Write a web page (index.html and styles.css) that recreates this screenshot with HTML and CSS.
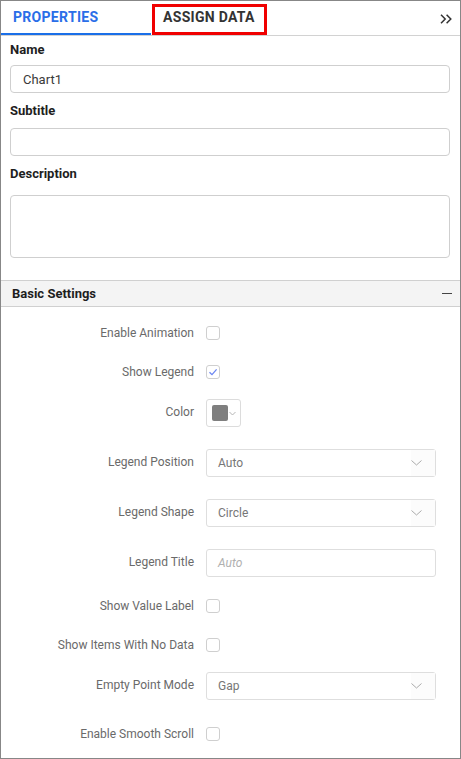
FILE: index.html
```html
<!DOCTYPE html>
<html>
<head>
<meta charset="utf-8">
<link rel="stylesheet" href="styles.css">
</head>
<body>
<div class="panel">
  <div class="tabs">
    <div class="tab active">PROPERTIES</div>
    <div class="tab marked">ASSIGN DATA</div>
    <div class="tab-spacer"></div>
    <svg class="collapse" width="12" height="10" viewBox="0 0 12 10"><path d="M1 0.8 L5.2 5 L1 9.2 M6.6 0.8 L10.8 5 L6.6 9.2" fill="none" stroke="#333" stroke-width="1.5"/></svg>
  </div>

  <div class="general">
    <div class="flabel first">Name</div>
    <div class="tbox"><span class="val">Chart1</span></div>
    <div class="flabel sub">Subtitle</div>
    <div class="tbox"></div>
    <div class="flabel desc">Description</div>
    <div class="tbox area"></div>
  </div>

  <div class="sect-head">
    <span>Basic Settings</span>
    <span class="minus"></span>
  </div>

  <div class="settings">
    <div class="row chk">
      <div class="lbl">Enable Animation</div>
      <div class="cb"></div>
    </div>
    <div class="row chk">
      <div class="lbl">Show Legend</div>
      <div class="cb"><svg width="12" height="12" viewBox="0 0 12 12"><path d="M2.5 6.2 L5 8.6 L9.6 3.4" fill="none" stroke="#6b86f2" stroke-width="1.3"/></svg></div>
    </div>
    <div class="row dd up3">
      <div class="lbl">Color</div>
      <div class="picker"><span class="swatch"></span><svg width="7" height="5" viewBox="0 0 7 5"><path d="M0.5 1 L3.5 4 L6.5 1" fill="none" stroke="#b5b5b5" stroke-width="1"/></svg></div>
    </div>
    <div class="row dd">
      <div class="lbl">Legend Position</div>
      <div class="select"><span class="sval">Auto</span><span class="sicon"><svg width="11" height="6" viewBox="0 0 11 6"><path d="M0.5 0.5 L5.5 5 L10.5 0.5" fill="none" stroke="#ababab" stroke-width="1"/></svg></span></div>
    </div>
    <div class="row dd">
      <div class="lbl">Legend Shape</div>
      <div class="select"><span class="sval">Circle</span><span class="sicon"><svg width="11" height="6" viewBox="0 0 11 6"><path d="M0.5 0.5 L5.5 5 L10.5 0.5" fill="none" stroke="#ababab" stroke-width="1"/></svg></span></div>
    </div>
    <div class="row dd">
      <div class="lbl">Legend Title</div>
      <div class="select"><span class="sval ph">Auto</span></div>
    </div>
    <div class="row chk up2">
      <div class="lbl">Show Value Label</div>
      <div class="cb"></div>
    </div>
    <div class="row chk">
      <div class="lbl">Show Items With No Data</div>
      <div class="cb"></div>
    </div>
    <div class="row dd up3">
      <div class="lbl">Empty Point Mode</div>
      <div class="select"><span class="sval">Gap</span><span class="sicon"><svg width="11" height="6" viewBox="0 0 11 6"><path d="M0.5 0.5 L5.5 5 L10.5 0.5" fill="none" stroke="#ababab" stroke-width="1"/></svg></span></div>
    </div>
    <div class="row chk down3">
      <div class="lbl">Enable Smooth Scroll</div>
      <div class="cb"></div>
    </div>
  </div>
</div>
</body>
</html>
```

FILE: styles.css
```css
* { box-sizing: border-box; }
html, body { margin: 0; padding: 0; background: #fff; }
body { font-family: Roboto, "Noto Sans", Arial, sans-serif; }

.panel {
  width: 461px;
  height: 759px;
  border: 1px solid #878787;
  background: #fff;
  overflow: hidden;
}

.tabs {
  display: flex;
  align-items: flex-start;
  height: 35px;
  border-bottom: 1px solid #d2d2d2;
}
.tab {
  font-size: 14px;
  font-weight: 700;
  letter-spacing: 0.3px;
  color: #333;
}
.tab.active {
  width: 150px;
  height: 34px;
  padding: 8px 0 0 12px;
  line-height: 16px;
  color: #2a6ee8;
  border-bottom: 2px solid #1a6fe8;
}
.tab.marked {
  margin: 3px 0 0 1px;
  width: 115px;
  height: 31px;
  border: 3px solid #f00000;
  padding: 2px 0 0 8px;
  line-height: 16px;
}
.tab-spacer { flex: 1; }
.collapse { margin: 13px 8px 0 0; }

.general { padding: 0 10px 0 9px; }
.flabel {
  font-size: 13px;
  font-weight: 700;
  color: #1e1e1e;
  line-height: 16px;
  margin-top: 10px;
  margin-bottom: 10px;
}
.flabel.first { margin-top: 6px; margin-bottom: 7px; }
.flabel.sub { margin-bottom: 9px; }
.flabel.desc { margin-bottom: 13px; }
.tbox {
  height: 28px;
  border: 1px solid #cfcfcf;
  border-radius: 4px;
  display: flex;
  align-items: center;
  padding-left: 12px;
}
.tbox.area { height: 63px; }
.val { font-size: 13px; color: #3a3a3a; }

.sect-head {
  margin-top: 22px;
  height: 27px;
  background: #f4f4f4;
  border-top: 1px solid #d0d0d0;
  border-bottom: 1px solid #d0d0d0;
  display: flex;
  align-items: center;
  justify-content: space-between;
  padding: 0 8px 0 11px;
  font-size: 13px;
  font-weight: 700;
  color: #1e1e1e;
}
.minus {
  width: 10px;
  height: 1.5px;
  background: #444;
}

.settings {
  padding-top: 17px;
  display: flex;
  flex-direction: column;
  gap: 22px;
}
.row {
  display: flex;
  align-items: center;
}
.row.chk { height: 17px; }
.row.dd { height: 28px; }
.row.up3 { margin-top: -3px; }
.row.up2 { margin-top: -2px; }
.row.down3 { margin-top: 3px; }
.lbl {
  width: 193px;
  text-align: right;
  font-size: 12px;
  color: #6a6a6a;
  margin-right: 12px;
  line-height: 14px;
}
.row.dd .lbl { margin-top: -3px; }
.cb {
  width: 14px;
  height: 14px;
  border: 1px solid #cfcfcf;
  border-radius: 3px;
  background: #fff;
  display: flex;
  align-items: center;
  justify-content: center;
}
.picker {
  width: 35px;
  height: 28px;
  border: 1px solid #dcdcdc;
  border-radius: 3px;
  display: flex;
  align-items: center;
  padding-left: 5px;
  gap: 1px;
}
.swatch {
  width: 16px;
  height: 16px;
  background: #7f7f7f;
  border-radius: 2px;
}
.select {
  width: 230px;
  height: 28px;
  border: 1px solid #dedede;
  border-radius: 3px;
  display: flex;
  align-items: center;
  justify-content: space-between;
  padding-left: 11px;
}
.sval { font-size: 12px; color: #777; }
.sval.ph { font-style: italic; color: #b0b0b0; }
.sicon {
  width: 24px;
  height: 26px;
  display: flex;
  align-items: center;
  justify-content: flex-start;
  background: #fcfcfc;
}
```
